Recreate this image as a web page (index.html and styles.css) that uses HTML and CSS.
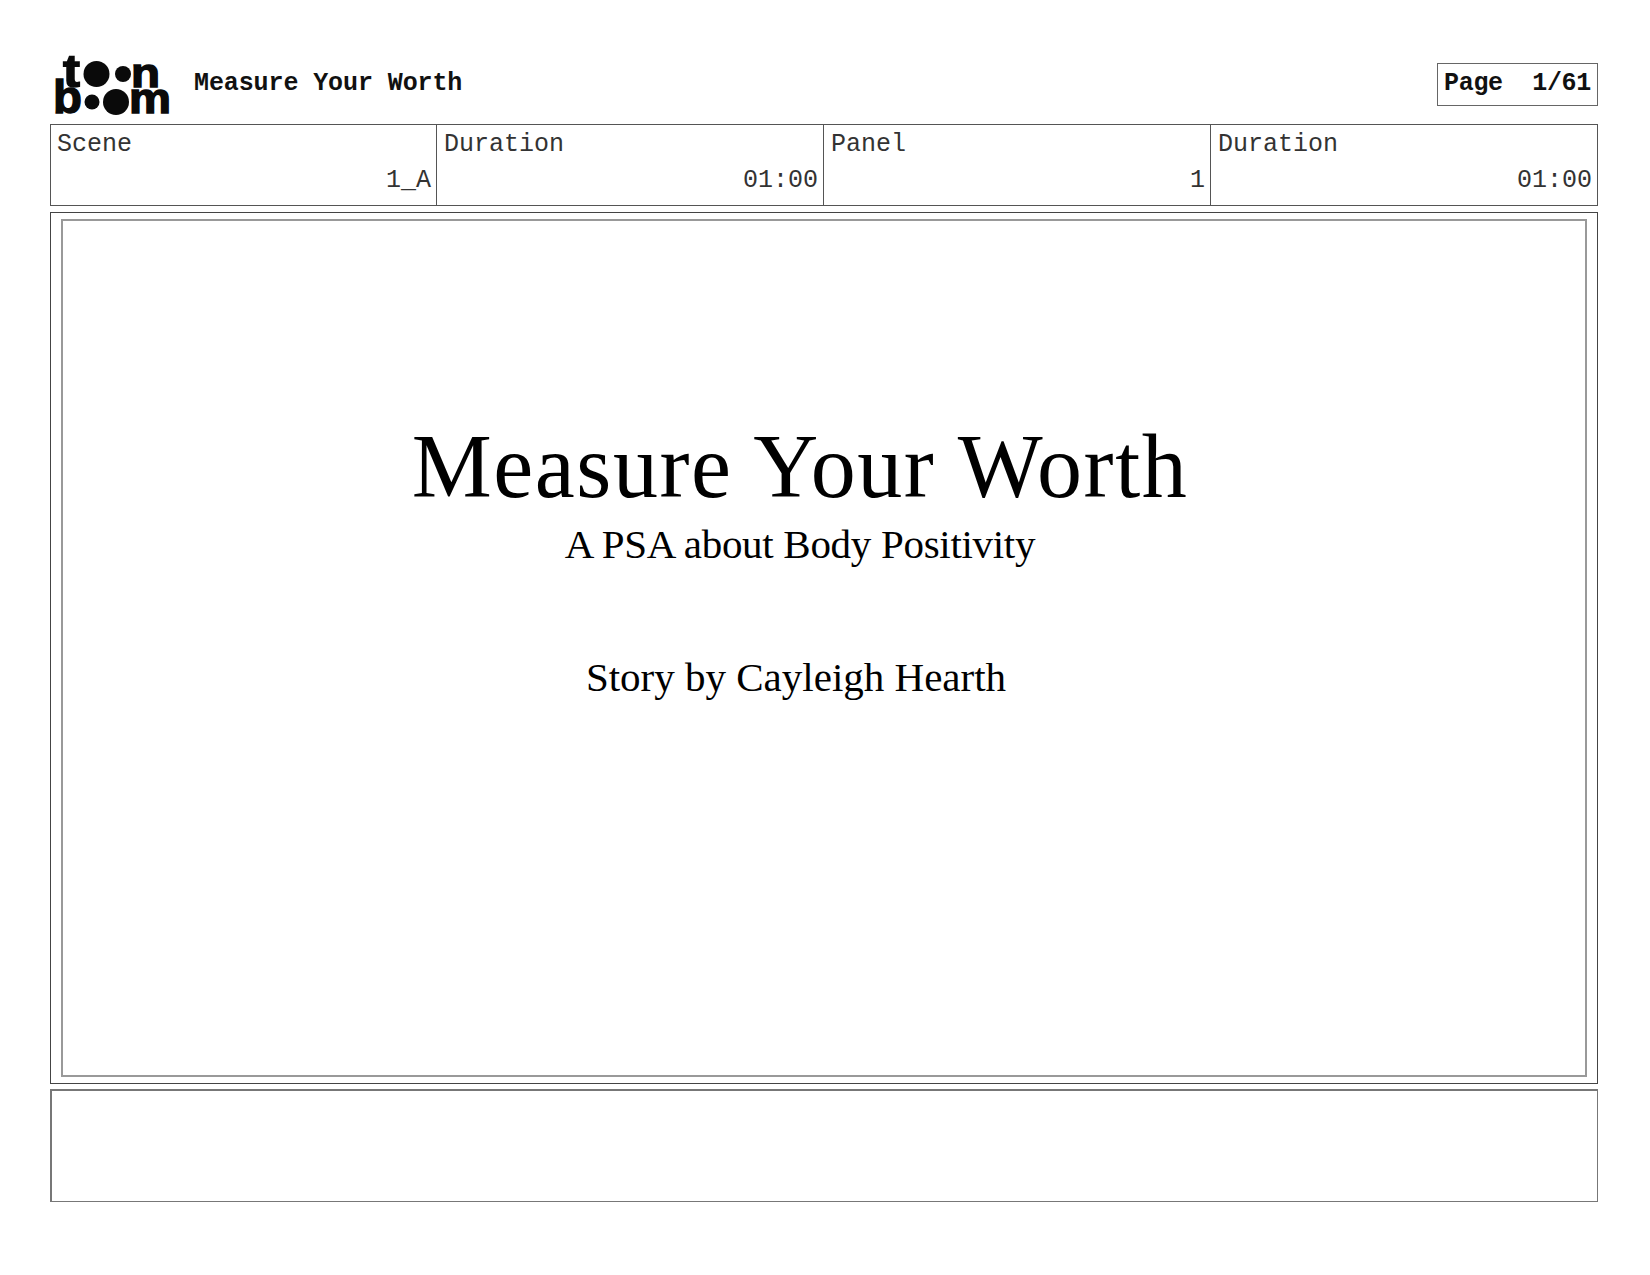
FILE: index.html
```html
<!DOCTYPE html>
<html lang="en">
<head>
<meta charset="utf-8">
<title>Measure Your Worth</title>
<link rel="stylesheet" href="styles.css">
</head>
<body>
<main class="sheet">
  <header class="head">
    <svg class="logo" viewBox="0 0 116 60" role="img" aria-label="toon boom">
      <text class="logo-t logo-tt" x="8" y="33" textLength="17" lengthAdjust="spacingAndGlyphs">t</text>
      <circle cx="41.5" cy="20" r="13"/>
      <circle cx="68" cy="20" r="8"/>
      <text class="logo-t logo-n" x="76" y="33" textLength="29" lengthAdjust="spacingAndGlyphs">n</text>
      <text class="logo-t logo-b" x="-2" y="59" textLength="29" lengthAdjust="spacingAndGlyphs">b</text>
      <circle cx="37" cy="48" r="7.5"/>
      <circle cx="61" cy="48" r="13"/>
      <text class="logo-t logo-m" x="74" y="59" textLength="42" lengthAdjust="spacingAndGlyphs">m</text>
    </svg>
    <h1 class="doc-title">Measure Your Worth</h1>
    <div class="page-no">Page  1/61</div>
  </header>

  <section class="meta">
    <div class="cell"><div class="label">Scene</div><div class="value">1_A</div></div>
    <div class="cell"><div class="label">Duration</div><div class="value">01:00</div></div>
    <div class="cell"><div class="label">Panel</div><div class="value">1</div></div>
    <div class="cell"><div class="label">Duration</div><div class="value">01:00</div></div>
  </section>

  <section class="frame">
    <div class="art">
      <div class="art-title">Measure Your Worth</div>
      <div class="art-sub">A PSA about Body Positivity</div>
      <div class="art-story">Story by Cayleigh Hearth</div>
    </div>
  </section>

  <section class="notes"></section>
</main>
</body>
</html>
```
FILE: styles.css
```css
* { box-sizing: border-box; }
html, body { margin: 0; background: #fff; }
.sheet {
  width: 1650px;
  height: 1275px;
  padding: 54px 52px 0 50px;
  display: flex;
  flex-direction: column;
  font-family: "Liberation Mono", monospace;
  color: #222;
}
.head {
  height: 60px;
  margin-bottom: 10px;
  display: flex;
  align-items: center;
  padding-left: 5px;
}
.logo { width: 116px; height: 60px; flex: none; fill: #0a0a0a; overflow: visible; }
.logo-t {
  font-family: "Liberation Sans", sans-serif;
  font-weight: 700;
  stroke: #0a0a0a;
  stroke-width: 1.4px;
}
.logo-tt { font-size: 46px; }
.logo-n { font-size: 41px; }
.logo-b { font-size: 47px; }
.logo-m { font-size: 42px; }
.doc-title {
  margin: 0 0 0 23px;
  font-size: 25px;
  font-weight: 700;
  line-height: 30px;
  letter-spacing: -0.1px;
  color: #111;
  flex: 1;
}
.page-no {
  width: 161px;
  height: 43px;
  border: 1px solid #666;
  padding-left: 6px;
  font-size: 25px;
  font-weight: 700;
  line-height: 40px;
  letter-spacing: -0.3px;
  white-space: pre;
  color: #111;
}
.meta {
  height: 82px;
  display: grid;
  grid-template-columns: 385px 387px 387px 1fr;
  border: 1px solid #555;
}
.cell { padding: 5px 5px 0 7px; border-left: 1px solid #555; overflow: hidden; }
.cell:first-child { border-left: 0; padding-left: 6px; }
.label { font-size: 25px; line-height: 30px; color: #333; }
.value { font-size: 25px; line-height: 30px; margin-top: 6px; text-align: right; color: #333; }
.frame {
  height: 872px;
  margin-top: 6px;
  border: 1px solid #444;
  padding: 6px 10px;
}
.art {
  height: 100%;
  border: 2px solid #999;
  padding: 196px 48px 0 0;
  text-align: center;
  font-family: "Liberation Serif", serif;
  color: #000;
}
.art-title { font-size: 90px; line-height: 100px; letter-spacing: 1.55px; }
.art-sub { font-size: 41px; line-height: 50px; margin-top: 2px; letter-spacing: -0.3px; }
.art-story { font-size: 41px; line-height: 50px; margin-top: 83px; padding-right: 8px; }
.notes {
  height: 113px;
  margin-top: 5px;
  border: 1px solid #777;
  border-top-width: 2px;
  border-left-width: 2px;
}
```
